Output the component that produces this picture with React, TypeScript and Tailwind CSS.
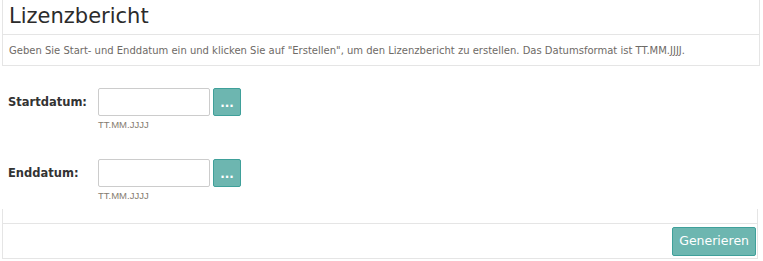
import React from "react";

const font = { fontFamily: '"DejaVu Sans", Verdana, sans-serif' };

function DateRow({ label }: { label: string }) {
  return (
    <div className="flex">
      <div className="w-[96px] pl-[6px] h-[28px] flex items-center pt-[2px] text-[11.5px] font-bold text-[#333]">
        {label}
      </div>
      <div className="flex flex-col">
        <div className="flex gap-[3px]">
          <input
            type="text"
            className="w-[112px] h-[28px] border border-[#cccccc] rounded-[2px] bg-white outline-none"
          />
          <button className="w-[28px] h-[28px] rounded-[2px] bg-[#6db6b0] border border-[#3fa09a] text-white text-[12px] font-bold leading-none flex items-center justify-center pt-[2px]">
            ...
          </button>
        </div>
        <div className="mt-[4px] text-[9.5px] leading-[9px] text-[#857c70] font-['Liberation_Sans',sans-serif]">TT.MM.JJJJ</div>
      </div>
    </div>
  );
}

export default function App() {
  return (
    <div className="w-[763px] h-[261px] bg-white px-[2px] overflow-hidden" style={font}>
      <div className="w-[758px] border-x border-b border-[#e5e5e5]">
        <div className="h-[35px] px-[6px] flex items-center border-b border-[#e5e5e5]">
          <h1 className="text-[21px] leading-none text-[#2b2b2b] font-normal pb-[1px]">Lizenzbericht</h1>
        </div>
        <div className="h-[30px] px-[6px] flex items-center text-[10px] text-[#6e6a66]">
          Geben Sie Start- und Enddatum ein und klicken Sie auf "Erstellen", um den Lizenzbericht zu erstellen. Das Datumsformat ist TT.MM.JJJJ.
        </div>
      </div>
      <div className="pt-[22px] flex flex-col gap-[30px]">
        <DateRow label="Startdatum:" />
        <DateRow label="Enddatum:" />
      </div>
      <div className="mt-[9px] w-[756px] border-x border-b border-[#e5e5e5]">
        <div className="h-[14px]" />
        <div className="border-t border-[#e5e5e5] h-[35px] flex items-center justify-end pr-[1px]">
          <button className="h-[29px] px-[6px] rounded-[2px] bg-[#6db6b0] border border-[#3fa09a] text-white text-[12.5px] leading-none">
            Generieren
          </button>
        </div>
      </div>
    </div>
  );
}
